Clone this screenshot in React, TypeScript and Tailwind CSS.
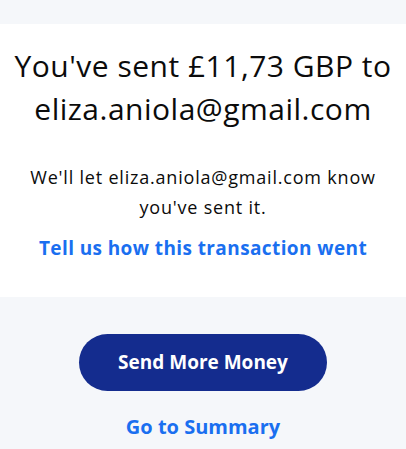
export default function App() {
  return (
    <div className="min-h-[449px] bg-[#f5f7fa] font-['Open_Sans',sans-serif]">
      <div className="h-6" />
      <section className="bg-white pt-[20px] pb-[36px] px-1 text-center">
        <h1 className="text-[30px] leading-[43px] tracking-[0.5px] text-[#0b0b0b]">
          You've sent £11,73 GBP to eliza.aniola@gmail.com
        </h1>
        <p className="mt-[32px] px-2 text-[18px] font-medium leading-[30px] tracking-[0.8px] text-[#0b0b0b]">
          We'll let eliza.aniola@gmail.com know you've sent it.
        </p>
        <a href="#" className="mt-[13px] block text-[19px] font-bold leading-[26px] tracking-[0.4px] text-[#1a6ff0]">
          Tell us how this transaction went
        </a>
      </section>
      <div className="flex flex-col items-center pt-[37px]">
        <button className="h-[57px] w-[248px] rounded-full bg-[#142c8e] text-[19px] font-bold text-white">
          Send More Money
        </button>
        <a href="#" className="mt-[21px] text-[20px] font-bold text-[#1a6ff0]">
          Go to Summary
        </a>
      </div>
    </div>
  );
}
